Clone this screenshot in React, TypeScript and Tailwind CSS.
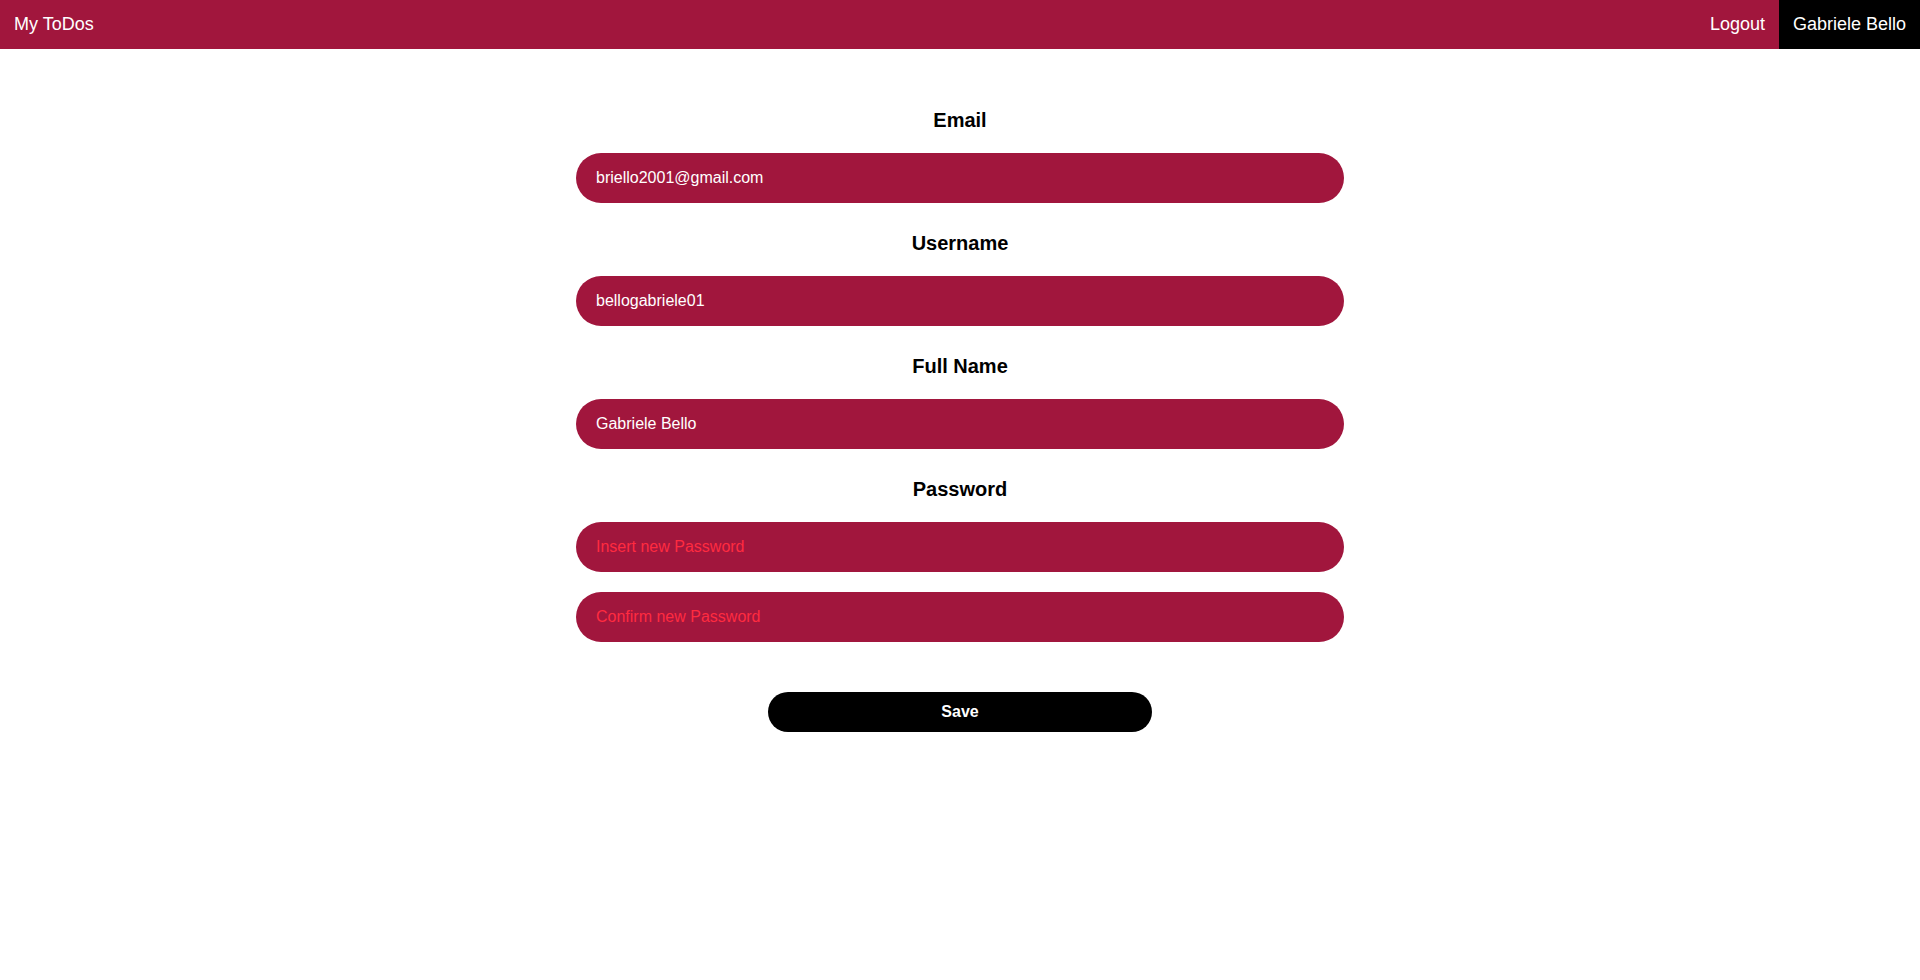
import { useState } from "react";

function Field({
  label,
  children,
}: {
  label: string;
  children: React.ReactNode;
}) {
  return (
    <div className="flex flex-col items-center">
      <label className="text-[20px] leading-[23px] font-bold text-black mb-[21px]">
        {label}
      </label>
      {children}
    </div>
  );
}

const inputClass =
  "w-[768px] h-[50px] rounded-full bg-[#a1163d] px-5 text-[16px] text-white placeholder:text-[#ff2b40] outline-none";

export default function App() {
  const [email, setEmail] = useState("briello2001@gmail.com");
  const [username, setUsername] = useState("bellogabriele01");
  const [fullName, setFullName] = useState("Gabriele Bello");
  const [password, setPassword] = useState("");
  const [confirm, setConfirm] = useState("");

  return (
    <div className="min-h-screen bg-white font-['Liberation_Sans',Arial,sans-serif]">
      <nav className="h-[49px] bg-[#a1163d] flex items-stretch justify-between text-white text-[18px]">
        <a className="flex items-center px-[14px]">My ToDos</a>
        <div className="flex items-stretch">
          <a className="flex items-center px-[14px]">Logout</a>
          <a className="flex items-center px-[14px] bg-black">Gabriele Bello</a>
        </div>
      </nav>

      <form
        className="flex flex-col items-center pt-[60px]"
        onSubmit={(e) => e.preventDefault()}
      >
        <div className="flex flex-col gap-[29px]">
          <Field label="Email">
            <input
              className={inputClass}
              value={email}
              onChange={(e) => setEmail(e.target.value)}
            />
          </Field>
          <Field label="Username">
            <input
              className={inputClass}
              value={username}
              onChange={(e) => setUsername(e.target.value)}
            />
          </Field>
          <Field label="Full Name">
            <input
              className={inputClass}
              value={fullName}
              onChange={(e) => setFullName(e.target.value)}
            />
          </Field>
          <Field label="Password">
            <div className="flex flex-col gap-5">
              <input
                type="password"
                className={inputClass}
                placeholder="Insert new Password"
                value={password}
                onChange={(e) => setPassword(e.target.value)}
              />
              <input
                type="password"
                className={inputClass}
                placeholder="Confirm new Password"
                value={confirm}
                onChange={(e) => setConfirm(e.target.value)}
              />
            </div>
          </Field>
        </div>
        <button
          type="submit"
          className="mt-[50px] w-[384px] h-[40px] rounded-full bg-black text-white text-[16px] font-bold"
        >
          Save
        </button>
      </form>
    </div>
  );
}
